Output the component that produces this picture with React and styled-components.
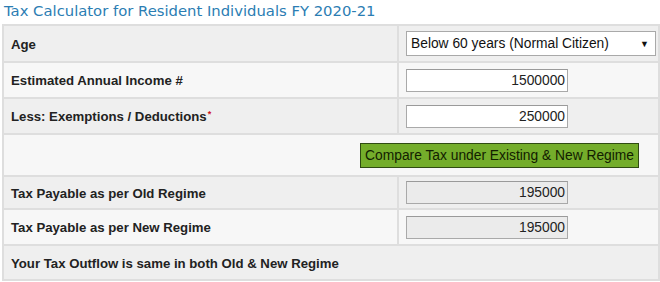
import React from "react";
import styled, { createGlobalStyle } from "styled-components";

const Global = createGlobalStyle`
  html, body { margin: 0; padding: 0; background: #fff; }
  body { font-family: "Liberation Sans", Arial, sans-serif; }
`;

const Wrap = styled.div`
  width: 660px;
  padding: 0 2px;
  box-sizing: border-box;
`;

const Title = styled.h2`
  margin: 0;
  height: 24px;
  line-height: 22px;
  padding-left: 2px;
  font-family: "DejaVu Sans", "Liberation Sans", sans-serif;
  font-weight: normal;
  font-size: 14.8px;
  color: #2b7db3;
`;

const Table = styled.table`
  width: 656px;
  border-collapse: collapse;
  table-layout: fixed;
`;

const Row = styled.tr`
  background: ${(p) => (p.$alt ? "#f7f7f7" : "#efefef")};
`;

const Cell = styled.td`
  border: 2px solid #dedede;
  height: ${(p) => p.$h || 32}px;
  padding: 0 0 0 7px;
  box-sizing: border-box;
  vertical-align: middle;
`;

const Label = styled.span`
  font-size: 13.2px;
  font-weight: bold;
  color: #222;
`;

const Star = styled.sup`
  color: #d0141e;
  font-size: 9px;
  font-weight: bold;
  vertical-align: 4px;
  margin-left: 1px;
`;

const Select = styled.div`
  width: 250px;
  height: 25px;
  box-sizing: border-box;
  border: 1px solid #a9a9a9;
  background: #fff;
  display: flex;
  align-items: center;
  justify-content: space-between;
  padding: 0 6px 0 4px;
  font-size: 13.8px;
  color: #111;
`;

const Arrow = styled.span`
  font-size: 9px;
  color: #111;
`;

const Input = styled.div`
  width: 162px;
  height: 23px;
  box-sizing: border-box;
  border: 1px solid #a9a9a9;
  border-top-color: #9a9a9a;
  background: ${(p) => (p.$ro ? "#ebebeb" : "#fff")};
  text-align: right;
  padding-right: 2px;
  line-height: 21px;
  font-size: 13.8px;
  color: #222;
`;

const ButtonCell = styled.td`
  border: 2px solid #dedede;
  height: 40px;
  padding: 0 19px 0 0;
  text-align: right;
  vertical-align: middle;
`;

const Button = styled.button`
  height: 25px;
  padding: 0 4px;
  background: #74ad2b;
  border: 1px solid #2f4b12;
  color: #122000;
  font-family: "Liberation Sans", Arial, sans-serif;
  font-size: 13.8px;
  cursor: pointer;
`;

export default function App() {
  return (
    <>
      <Global />
      <Wrap>
        <Title>Tax Calculator for Resident Individuals FY 2020-21</Title>
        <Table>
          <colgroup>
            <col style={{ width: 395 }} />
            <col style={{ width: 261 }} />
          </colgroup>
          <tbody>
            <Row>
              <Cell $h={37}><Label>Age</Label></Cell>
              <Cell $h={37}>
                <Select>
                  <span>Below 60 years (Normal Citizen)</span>
                  <Arrow>▼</Arrow>
                </Select>
              </Cell>
            </Row>
            <Row $alt>
              <Cell $h={36}><Label>Estimated Annual Income #</Label></Cell>
              <Cell $h={36}><Input>1500000</Input></Cell>
            </Row>
            <Row>
              <Cell $h={36}><Label>Less: Exemptions / Deductions<Star>*</Star></Label></Cell>
              <Cell $h={36}><Input>250000</Input></Cell>
            </Row>
            <Row $alt>
              <ButtonCell colSpan={2}>
                <Button>Compare Tax under Existing &amp; New Regime</Button>
              </ButtonCell>
            </Row>
            <Row>
              <Cell $h={33}><Label>Tax Payable as per Old Regime</Label></Cell>
              <Cell $h={33}><Input $ro>195000</Input></Cell>
            </Row>
            <Row $alt>
              <Cell $h={36}><Label>Tax Payable as per New Regime</Label></Cell>
              <Cell $h={36}><Input $ro>195000</Input></Cell>
            </Row>
            <Row>
              <Cell $h={35} colSpan={2}><Label>Your Tax Outflow is same in both Old &amp; New Regime</Label></Cell>
            </Row>
          </tbody>
        </Table>
      </Wrap>
    </>
  );
}
